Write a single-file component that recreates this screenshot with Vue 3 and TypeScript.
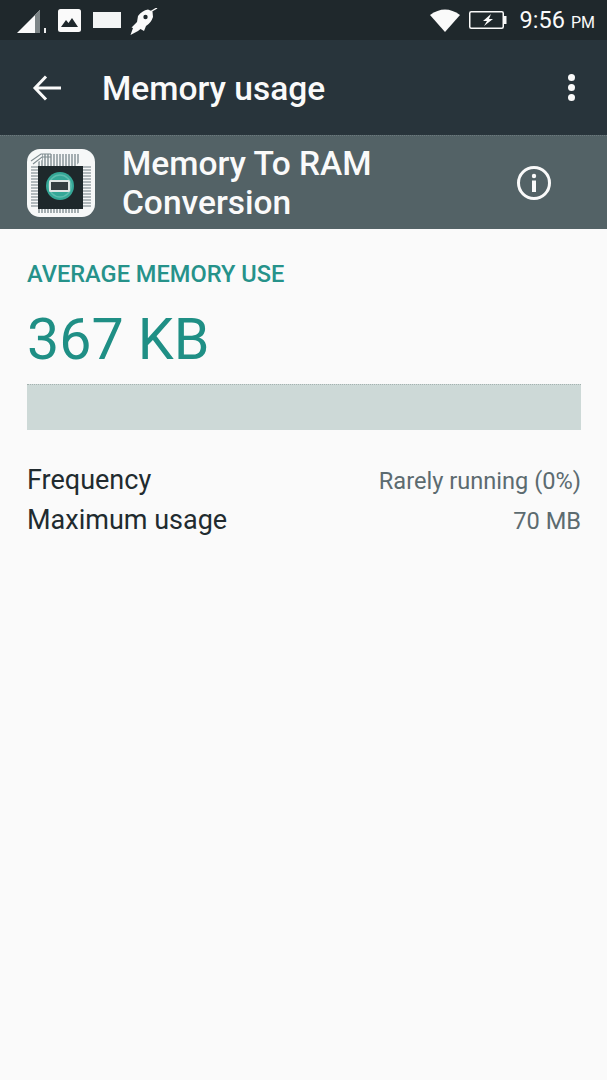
<script setup lang="ts">
const topPins = Array.from({ length: 14 }, (_, i) => 12 + i * 3);
const sidePins = Array.from({ length: 14 }, (_, i) => 18 + i * 3);
</script>

<template>
  <div class="screen">
    <div class="status-bar">
      <div class="status-left">
        <svg class="ic-signal" width="30" height="28" viewBox="0 0 30 28">
          <path d="M0 24 L23 1 V24 Z" fill="#fafafa" />
          <path d="M18 6 L23 1 V24 H18 Z" fill="#7d8587" />
          <rect x="27" y="19" width="2" height="5" fill="#eee" />
        </svg>
        <svg class="ic-image" width="23" height="23" viewBox="0 0 23 23">
          <rect width="23" height="23" rx="2.5" fill="#fafafa" />
          <path d="M3 18 L8 11 L10.5 14 L14 9 L20 18 Z" fill="#1f282c" />
        </svg>
        <div class="ic-card"></div>
        <svg class="ic-rocket" width="28" height="28" viewBox="0 0 28 28">
          <path d="M0.5 27 L3 20 L1.5 19.5 L7 14 L8 8 Q12 2.5 18 1.5 L22.5 3.5 L23 9 Q21 15 16 18 L14 23 L10.5 21 L8 23 Z" fill="#fafafa" />
          <path d="M20 4 L27 0" stroke="#fafafa" stroke-width="1.4" />
          <circle cx="15.5" cy="9" r="2.2" fill="#1f282c" />
        </svg>
      </div>
      <div class="status-right">
        <svg class="ic-wifi" width="30" height="23" viewBox="0 0 30 23">
          <path d="M0 6 Q15 -5 30 6 L15 23 Z" fill="#fafafa" />
        </svg>
        <svg class="ic-battery" width="38" height="18" viewBox="0 0 38 18">
          <rect x="0.75" y="0.75" width="33.5" height="16.5" rx="1.5" fill="none" stroke="#fafafa" stroke-width="1.5" />
          <rect x="35" y="5" width="2.5" height="8" fill="#fafafa" />
          <path d="M22 3 L14 10 H18 L15 15 L24 8 H20 Z" fill="#fafafa" />
        </svg>
        <span class="clock">9:56<small>PM</small></span>
      </div>
    </div>

    <div class="toolbar">
      <svg class="ic-back" width="30" height="26" viewBox="0 0 30 26">
        <path d="M14 1.5 L3 13 L14 24.5 M3.5 13 H29" fill="none" stroke="#fafafa" stroke-width="3" />
      </svg>
      <h1 class="title">Memory usage</h1>
      <div class="overflow"><i></i><i></i><i></i></div>
    </div>

    <div class="app-header">
      <svg class="app-icon" width="68" height="68" viewBox="0 0 68 68">
        <rect width="68" height="68" rx="13" fill="#f6f8f8" />
        <g stroke="#6f7d82" stroke-width="1.2">
          <path v-for="p in topPins" :key="'t' + p" :d="`M${p} 5 V64`" />
          <path v-for="p in sidePins" :key="'s' + p" :d="`M4 ${p} H64`" />
        </g>
        <path d="M0 14 Q6 3 15 1 L15 11 L4 16 Z" fill="#f6f8f8" />
        <path d="M4 12 L14 5 H24 M6 15 L15 8 H24" fill="none" stroke="#7f8c90" stroke-width="1.1" />
        <path d="M62 5 L48 20" stroke="#f6f8f8" stroke-width="3" />
        <rect x="11" y="17" width="45" height="43" fill="#1e282b" />
        <circle cx="33" cy="37" r="14" fill="#35a797" />
        <circle cx="33" cy="37" r="11" fill="none" stroke="#5fbcae" stroke-width="1.5" />
        <rect x="22" y="31" width="21" height="12" rx="1.5" fill="#dfe5e4" />
        <rect x="24" y="33" width="17" height="8" fill="#333d40" />
      </svg>
      <div class="app-name">Memory To RAM<br />Conversion</div>
      <svg class="ic-info" width="36" height="36" viewBox="0 0 36 36">
        <circle cx="18" cy="18" r="15.5" fill="none" stroke="#fafafa" stroke-width="3" />
        <circle cx="18" cy="11" r="2.2" fill="#fafafa" />
        <rect x="16" y="15.5" width="4" height="11.5" fill="#fafafa" />
      </svg>
    </div>

    <main class="content">
      <div class="section-label">AVERAGE MEMORY USE</div>
      <div class="amount">367 KB</div>
      <div class="usage-bar"></div>
      <div class="row">
        <span class="row-label">Frequency</span>
        <span class="row-value">Rarely running (0%)</span>
      </div>
      <div class="row">
        <span class="row-label">Maximum usage</span>
        <span class="row-value">70 MB</span>
      </div>
    </main>
  </div>
</template>

<style scoped>
.screen {
  display: flex;
  flex-direction: column;
  height: 1080px;
  background: #fafafa;
  font-family: Roboto, "Noto Sans", sans-serif;
  overflow: hidden;
}

.status-bar {
  display: flex;
  align-items: center;
  justify-content: space-between;
  height: 40px;
  padding: 0 12px 0 17px;
  background: #1f282c;
  color: #fafafa;
}

.status-left,
.status-right {
  display: flex;
  align-items: center;
}

.ic-signal {
  margin-top: 6px;
}

.ic-image {
  margin-left: 11px;
  margin-top: 1px;
}

.ic-card {
  width: 28px;
  height: 16px;
  margin-left: 12px;
  background: #f2f4f4;
}

.ic-rocket {
  margin-left: 9px;
  margin-top: 4px;
}

.ic-wifi {
  margin-top: 1px;
}

.ic-battery {
  margin-left: 9px;
}

.clock {
  margin-left: 13px;
  font-size: 23.5px;
}

.clock small {
  margin-left: 6px;
  font-size: 16px;
}

.toolbar {
  display: flex;
  align-items: center;
  height: 95px;
  padding: 0 32px;
  background: #28343b;
}

.title {
  flex: 1;
  margin: 2px 0 0 40px;
  color: #fafafa;
  font-size: 33.5px;
  font-weight: 500;
}

.overflow {
  display: flex;
  flex-direction: column;
  gap: 3px;
}

.overflow i {
  width: 7px;
  height: 7px;
  border-radius: 50%;
  background: #fafafa;
}

.app-header {
  display: flex;
  align-items: center;
  height: 93px;
  padding: 0 55px 0 27px;
  border-top: 1px dotted #6b787c;
  background: #536266;
}

.app-name {
  flex: 1;
  margin-left: 27px;
  color: #fafafa;
  font-size: 33.5px;
  font-weight: 500;
  line-height: 39px;
}

.content {
  padding: 32px 26px 0 27px;
}

.section-label {
  color: #26928a;
  font-size: 23.6px;
  font-weight: 500;
  line-height: 27px;
}

.amount {
  margin-top: 19px;
  color: #1f8f85;
  font-size: 57.3px;
  line-height: 66px;
}

.usage-bar {
  height: 45px;
  margin-top: 11px;
  border-top: 1px dotted #a5b2b0;
  background: #cdd9d7;
}

.row {
  display: flex;
  align-items: center;
  justify-content: space-between;
  height: 40px;
}

.usage-bar + .row {
  margin-top: 30px;
}

.row-label {
  color: #212b2f;
  font-size: 27px;
}

.row-value {
  padding-top: 1px;
  color: #5c6b70;
  font-size: 23.6px;
}
</style>

<style>
html,
body {
  margin: 0;
  background: #fafafa;
}
</style>
